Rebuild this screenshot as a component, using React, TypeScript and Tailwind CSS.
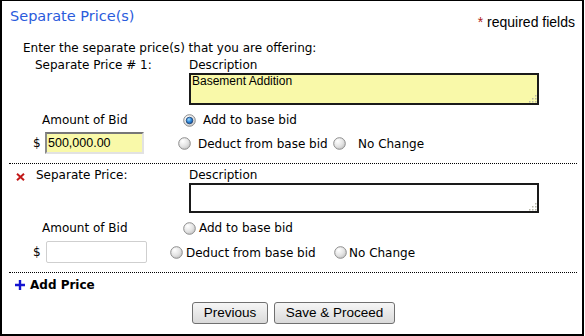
import React from "react";

const sans = "font-['Liberation_Sans',Arial,sans-serif]";

function Radio({ checked = false }: { checked?: boolean }) {
  return (
    <svg width="13" height="13" viewBox="0 0 13 13" className="shrink-0">
      <defs>
        <radialGradient id="rb" cx="35%" cy="30%" r="75%">
          <stop offset="0%" stopColor="#ffffff" />
          <stop offset="60%" stopColor="#e4e4e4" />
          <stop offset="100%" stopColor="#c4c4c4" />
        </radialGradient>
        <radialGradient id="rd" cx="40%" cy="35%" r="70%">
          <stop offset="0%" stopColor="#9fdcff" />
          <stop offset="55%" stopColor="#2c86d8" />
          <stop offset="100%" stopColor="#164f95" />
        </radialGradient>
      </defs>
      <circle cx="6.5" cy="6.5" r="5.8" fill="url(#rb)" stroke="#8c8c8c" strokeWidth="1" />
      {checked && <circle cx="6.5" cy="6.5" r="3.3" fill="url(#rd)" stroke="#1d3f6e" strokeWidth="0.8" />}
    </svg>
  );
}

function Grip() {
  const dots = [
    [10, 4],
    [7, 7],
    [10, 7],
    [4, 10],
    [7, 10],
    [10, 10],
  ];
  return (
    <svg width="13" height="13" viewBox="0 0 13 13" className="pointer-events-none absolute bottom-[1px] right-[1px]">
      {dots.map(([x, y]) => (
        <rect key={`${x}-${y}`} x={x} y={y} width="1.5" height="1.5" fill="#b8b8a8" />
      ))}
    </svg>
  );
}

function Box({ value, yellow, h }: { value: string; yellow?: boolean; h: string }) {
  return (
    <div className={`relative w-[350px] ${h}`}>
      <textarea
        readOnly
        value={value}
        className={`block h-full w-full resize-none border-2 border-[#1a1a1a] px-[1px] pt-0 text-[12px] leading-[13px] text-black outline-none ${sans} ${
          yellow ? "bg-[#f9f9a9]" : "bg-white"
        }`}
      />
      <Grip />
    </div>
  );
}

export default function App() {
  return (
    <div className="h-[336px] w-[584px] border-x-2 border-b-2 border-t border-black bg-white font-['DejaVu_Sans',sans-serif] text-[12px] text-black">
      <div className="flex h-[39px] justify-between">
        <div className="pl-[8px] pt-[7px] text-[14.5px] leading-[17px] text-[#2a5bdc]">Separate Price(s)</div>
        <div className={`pr-[7px] pt-[13px] text-[14px] leading-[16px] ${sans}`}>
          <span className="text-[#b02020]">*</span> required fields
        </div>
      </div>

      <div className="h-[16px] pl-[21px] leading-[16px]">Enter the separate price(s) that you are offering:</div>

      {/* first price */}
      <div className="mt-[1px] flex">
        <div className="h-[16px] w-[187px] pl-[33px] leading-[16px]">Separate Price # 1:</div>
        <div>
          <div className="h-[16px] leading-[16px]">Description</div>
          <Box value="Basement Addition" yellow h="h-[32px]" />
        </div>
      </div>
      <div className="mt-[7px] flex h-[16px] items-center leading-[16px]">
        <span className="w-[181px] pl-[40px]">Amount of Bid</span>
        <Radio checked />
        <span className="ml-[7px]">Add to base bid</span>
      </div>
      <div className="mt-[4px] flex h-[22px] items-center leading-[16px]">
        <span className="ml-[31px] w-[12px]">$</span>
        <input
          readOnly
          value="500,000.00"
          className={`h-[22px] w-[99px] border-2 border-b-[#e2e2e2] border-l-[#8a8a8a] border-r-[#e2e2e2] border-t-[#777] bg-[#f9f9a9] pl-[1px] text-[12.5px] text-black outline-none ${sans}`}
        />
        <span className="ml-[34px]">
          <Radio />
        </span>
        <span className="ml-[7px] w-[135px] pt-[2px]">Deduct from base bid</span>
        <Radio />
        <span className="ml-[12px] pt-[2px]">No Change</span>
      </div>

      <div className="ml-[7px] mt-[9px] w-[568px] border-t border-dotted border-black" />

      {/* second price */}
      <div className="mt-[3px] flex">
        <div className="flex h-[16px] w-[187px] items-center leading-[16px]">
          <svg width="9" height="8" viewBox="0 0 9 8" className="ml-[14px] mt-[3px]">
            <path d="M1 0.8 L8 7.2 M8 0.8 L1 7.2" stroke="#c21818" strokeWidth="2" />
          </svg>
          <span className="ml-[11px]">Separate Price:</span>
        </div>
        <div>
          <div className="h-[16px] leading-[16px]">Description</div>
          <Box value="" h="h-[30px]" />
        </div>
      </div>
      <div className="mt-[7px] flex h-[16px] items-center leading-[16px]">
        <span className="w-[181px] pl-[40px]">Amount of Bid</span>
        <Radio />
        <span className="ml-[3px]">Add to base bid</span>
      </div>
      <div className="mt-[5px] flex h-[22px] items-center leading-[16px]">
        <span className="ml-[31px] w-[13px]">$</span>
        <input readOnly value="" className="h-[22px] w-[101px] rounded-[2px] border border-[#cfcfcf] bg-white outline-none" />
        <span className="ml-[23px]">
          <Radio />
        </span>
        <span className="ml-[3px] w-[148px] pt-[2px]">Deduct from base bid</span>
        <Radio />
        <span className="ml-[2px] pt-[2px]">No Change</span>
      </div>

      <div className="ml-[7px] mt-[9px] w-[568px] border-t border-dotted border-black" />

      <div className="mt-[4px] flex h-[16px] items-center">
        <svg width="10" height="10" viewBox="0 0 10 10" className="ml-[13px]">
          <path d="M5 0 V10 M0 5 H10" stroke="#1515d0" strokeWidth="2.4" />
        </svg>
        <span className="ml-[5px] font-bold leading-[16px]">Add Price</span>
      </div>

      <div className={`mt-[9px] flex gap-[6px] pl-[190px] text-[13.5px] ${sans}`}>
        <button
          type="button"
          className="h-[22px] w-[76px] rounded-[3px] border border-[#707070] bg-gradient-to-b from-[#f6f6f6] to-[#dadada] text-black"
        >
          Previous
        </button>
        <button
          type="button"
          className="h-[22px] w-[121px] rounded-[3px] border border-[#707070] bg-gradient-to-b from-[#f6f6f6] to-[#dadada] text-black"
        >
          Save &amp; Proceed
        </button>
      </div>
    </div>
  );
}
